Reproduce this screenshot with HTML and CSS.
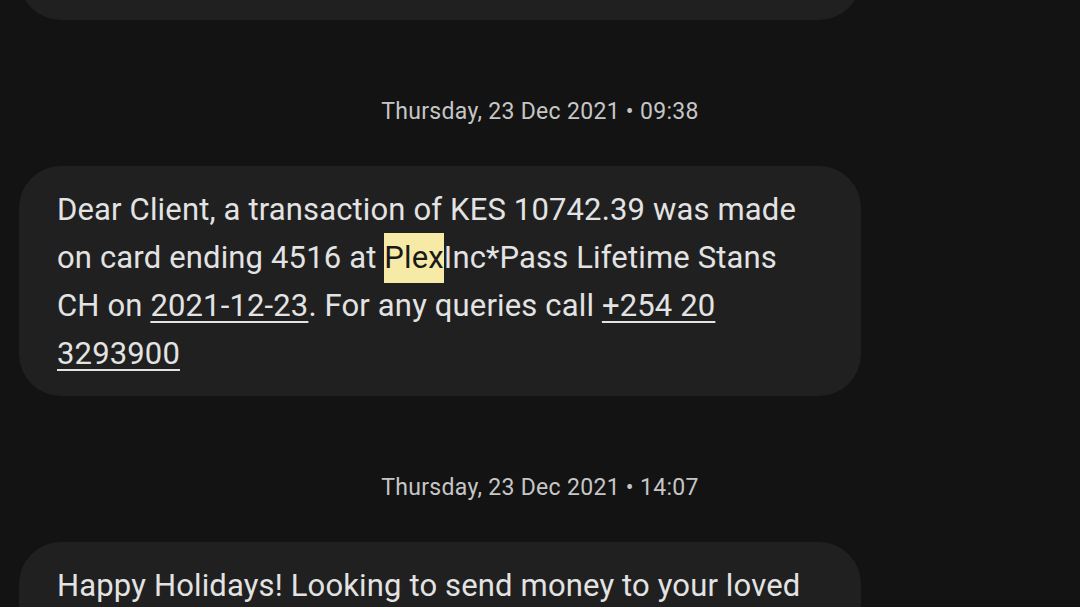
FILE: index.html
```html
<!DOCTYPE html>
<html lang="en">
<head>
<meta charset="utf-8">
<link rel="stylesheet" href="styles.css">
</head>
<body>
<main class="thread">
  <div class="bubble bubble-cut"></div>
  <div class="stamp">Thursday, 23 Dec 2021 • 09:38</div>
  <div class="bubble">
    <p class="msg">Dear Client, a transaction of KES 10742.39 was made on card ending 4516 at <span class="hl">Plex</span>Inc*Pass Lifetime Stans CH on <span class="link">2021-12-23</span>. For any queries call <span class="link">+254 20 3293900</span></p>
  </div>
  <div class="stamp">Thursday, 23 Dec 2021 • 14:07</div>
  <div class="bubble">
    <p class="msg">Happy Holidays! Looking to send money to your loved ones abroad this season? Send it instantly with Equitel.</p>
  </div>
</main>
</body>
</html>
```
FILE: styles.css
```css
html, body {
  margin: 0;
  padding: 0;
  background: #131313;
  height: 100%;
  overflow: hidden;
}
body {
  font-family: Roboto, "Noto Sans", sans-serif;
  color: #e3e3e3;
}
.thread {
  display: flex;
  flex-direction: column;
  padding: 0 219px 0 19px;
  margin-top: -100px;
}
.bubble {
  background: #202020;
  border-radius: 42px;
  padding: 20px 40px 18px 38px;
}
.bubble-cut {
  height: 82px;
}
.msg {
  margin: 0;
  font-size: 31px;
  line-height: 48px;
  letter-spacing: 0.15px;
}
.hl {
  background: #f7eaa6;
  color: #1a1a1a;
  padding: 6px 0 7px;
}
.link {
  text-decoration: underline;
  text-decoration-thickness: 2px;
  text-underline-offset: 5px;
}
.stamp {
  text-align: center;
  font-size: 23px;
  line-height: 30px;
  letter-spacing: 0.3px;
  color: #c6c6c6;
  margin: 77px 0 39px;
  width: 1042px;
}
```
